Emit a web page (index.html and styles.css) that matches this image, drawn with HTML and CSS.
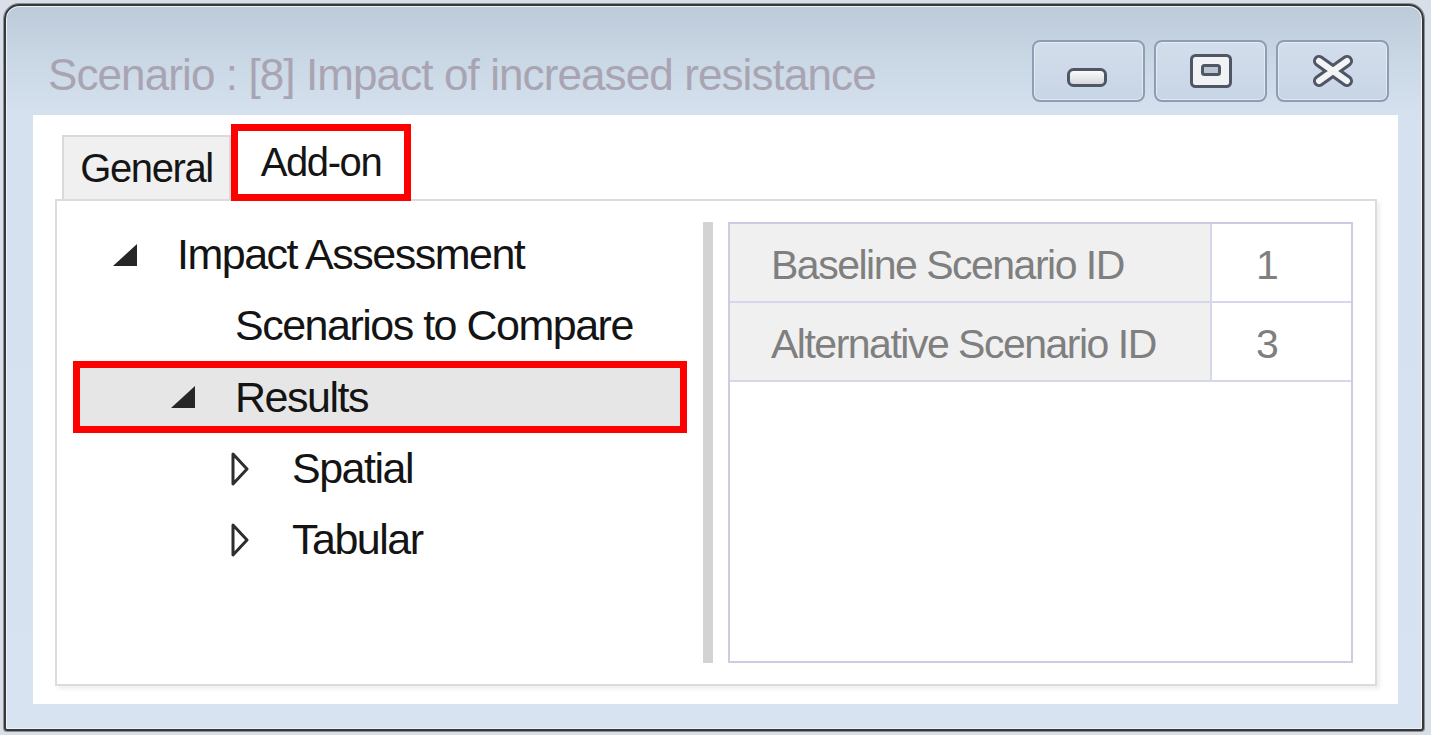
FILE: index.html
```html
<!DOCTYPE html>
<html>
<head>
<meta charset="utf-8">
<title>Scenario</title>
<link rel="stylesheet" href="styles.css">
</head>
<body>
<div class="window">
  <div class="titlebar">
    <div class="title">Scenario : [8] Impact of increased resistance</div>
    <div class="caption-buttons">
      <div class="cbtn cbtn-min">
        <svg width="40" height="19" viewBox="0 0 40 19">
          <defs>
            <linearGradient id="gmin" x1="0" y1="0" x2="0" y2="1">
              <stop offset="0" stop-color="#ffffff"/>
              <stop offset="1" stop-color="#d2d4d8"/>
            </linearGradient>
          </defs>
          <rect x="1.5" y="1.5" width="37" height="16" rx="5" fill="url(#gmin)" stroke="#4f5666" stroke-width="3"/>
        </svg>
      </div>
      <div class="cbtn">
        <svg width="42" height="34" viewBox="0 0 42 34">
          <rect x="1.5" y="1.5" width="39" height="31" rx="4" fill="#f1f2f4" stroke="#4f5666" stroke-width="3"/>
          <rect x="12.5" y="11.5" width="17" height="9" rx="2" fill="#bcc4d2" stroke="#4f5666" stroke-width="3"/>
        </svg>
      </div>
      <div class="cbtn">
        <svg width="44" height="34" viewBox="0 0 44 34">
          <path d="M8 7 L36 27 M36 7 L8 27" stroke="#4f5666" stroke-width="12" stroke-linecap="round" fill="none"/>
          <path d="M8 7 L36 27 M36 7 L8 27" stroke="#f3f4f6" stroke-width="6" stroke-linecap="round" fill="none"/>
        </svg>
      </div>
    </div>
  </div>

  <div class="client">
    <div class="tabs">
      <div class="tab">General</div>
      <div class="tab tab-active">Add-on</div>
    </div>
    <div class="panel">
      <div class="tree">
        <div class="node l0">
          <span class="exp"><svg width="24" height="22" viewBox="0 0 24 22"><polygon points="24,0 24,22 0,22" fill="#262626"/></svg></span>
          <span class="label">Impact Assessment</span>
        </div>
        <div class="node l1">
          <span class="exp"></span>
          <span class="label">Scenarios to Compare</span>
        </div>
        <div class="node l1 selected">
          <span class="exp"><svg width="24" height="22" viewBox="0 0 24 22"><polygon points="24,0 24,22 0,22" fill="#262626"/></svg></span>
          <span class="label">Results</span>
        </div>
        <div class="node l2">
          <span class="exp"><svg width="18" height="34" viewBox="0 0 18 34"><polygon points="2,2 16,17 2,32" fill="#ffffff" stroke="#2e2e2e" stroke-width="3" stroke-linejoin="round"/></svg></span>
          <span class="label">Spatial</span>
        </div>
        <div class="node l2">
          <span class="exp"><svg width="18" height="34" viewBox="0 0 18 34"><polygon points="2,2 16,17 2,32" fill="#ffffff" stroke="#2e2e2e" stroke-width="3" stroke-linejoin="round"/></svg></span>
          <span class="label">Tabular</span>
        </div>
      </div>
      <div class="splitter"></div>
      <div class="grid">
        <div class="prow">
          <div class="pname">Baseline Scenario ID</div>
          <div class="pval">1</div>
        </div>
        <div class="prow">
          <div class="pname">Alternative Scenario ID</div>
          <div class="pval">3</div>
        </div>
      </div>
    </div>
  </div>
</div>
</body>
</html>
```

FILE: styles.css
```css
html, body {
  margin: 0;
  padding: 0;
}

body {
  background: #d9dfe8;
  width: 1431px;
  height: 735px;
  overflow: hidden;
  font-family: "Liberation Sans", Arial, sans-serif;
}

.window {
  box-sizing: border-box;
  width: 1420px;
  height: 727px;
  margin: 4px 0 0 4px;
  border: 2px solid #383838;
  border-radius: 15px 15px 3px 3px;
  background: linear-gradient(#bdcad9 0px, #cbd8e6 60px, #d5e1ee 110px, #d7e3f0 100%);
  box-shadow: inset 0 0 0 1px #eef3f9, 0 0 0 1px #8a8f98;
  display: flex;
  flex-direction: column;
  padding: 0 24px 25px 27px;
}

/* ---------- title bar ---------- */
.titlebar {
  height: 109px;
  flex: none;
  display: flex;
  justify-content: space-between;
  align-items: flex-start;
  padding: 0 9px 0 15px;
}

.title {
  margin-top: 47px;
  font-size: 44px;
  line-height: 44px;
  letter-spacing: -0.9px;
  color: #a9a4b2;
  white-space: nowrap;
}

.caption-buttons {
  display: flex;
  gap: 9px;
  margin-top: 34px;
}

.cbtn {
  box-sizing: border-box;
  width: 113px;
  height: 62px;
  border: 2px solid #8e9cb4;
  border-radius: 8px;
  background: linear-gradient(#d3deec, #c8d5e5);
  box-shadow: inset 0 0 0 1px rgba(255, 255, 255, 0.45);
  display: flex;
  align-items: center;
  justify-content: center;
}

.cbtn svg {
  display: block;
}

.cbtn-min svg {
  margin-top: 12px;
  margin-left: -3px;
}

/* ---------- client ---------- */
.client {
  flex: 1;
  background: #ffffff;
  display: flex;
  flex-direction: column;
  padding-top: 9px;
}

.tabs {
  height: 77px;
  margin-bottom: -2px;
  padding-left: 29px;
  display: flex;
  align-items: flex-start;
  position: relative;
  z-index: 1;
}

.tab {
  box-sizing: border-box;
  height: 64px;
  margin-top: 11px;
  width: 169px;
  background: #f0f0f0;
  border: 2px solid #dadada;
  border-bottom: none;
  font-size: 40px;
  letter-spacing: -1.4px;
  color: #151515;
  display: flex;
  align-items: center;
  justify-content: center;
}

.tab-active {
  height: 77px;
  margin-top: 0;
  width: 180px;
  background: #ffffff;
  border: none;
  box-shadow: inset 0 0 0 7px #ff0000;
  padding-bottom: 1px;
}

.panel {
  flex: 1;
  margin: 0 21px 18px 22px;
  border: 2px solid #dcdcdc;
  box-shadow: 3px 3px 4px rgba(0, 0, 0, 0.07);
  display: flex;
  align-items: stretch;
}

/* ---------- tree ---------- */
.tree {
  box-sizing: border-box;
  width: 646px;
  flex: none;
  padding: 18px 16px 0 16px;
}

.node {
  box-sizing: border-box;
  height: 71px;
  display: flex;
  align-items: center;
  font-size: 43px;
  letter-spacing: -1.5px;
  color: #141414;
  white-space: nowrap;
}

.node.l0 { padding-left: 40px; }
.node.l1 { padding-left: 98px; }
.node.l2 { padding-left: 158px; }

.node.l2 .exp {
  width: 61px;
}

.node.selected {
  height: 72px;
  background: #e6e6e6;
  box-shadow: inset 0 0 0 7px #ff0000;
}

.exp {
  width: 64px;
  flex: none;
  display: flex;
  align-items: center;
}

.exp svg {
  display: block;
}

.splitter {
  width: 10px;
  flex: none;
  margin: 21px 0;
  background: #d3d3d3;
}

/* ---------- property grid ---------- */
.grid {
  box-sizing: border-box;
  width: 625px;
  flex: none;
  margin: 21px 22px 21px 15px;
  border: 2px solid #cccde2;
}

.prow {
  height: 77px;
  display: flex;
  border-bottom: 2px solid #d4d8ea;
  font-size: 41px;
  letter-spacing: -1.5px;
  color: #7f7f7f;
}

.pname {
  box-sizing: border-box;
  width: 482px;
  flex: none;
  background: #f0f0f0;
  border-right: 2px solid #d4d8ea;
  padding: 6px 0 0 41px;
  display: flex;
  align-items: center;
  white-space: nowrap;
}

.pval {
  flex: 1;
  padding: 6px 0 0 44px;
  display: flex;
  align-items: center;
}
```
